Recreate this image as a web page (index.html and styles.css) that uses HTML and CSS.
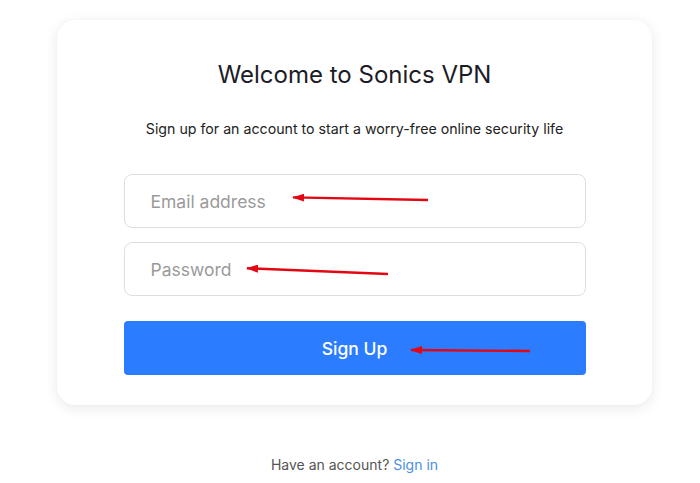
FILE: index.html
```html
<!DOCTYPE html>
<html>
<head>
<meta charset="utf-8">
<link rel="stylesheet" href="styles.css">
</head>
<body>
<main class="page">
  <section class="card">
    <h1 class="title">Welcome to Sonics VPN</h1>
    <p class="subtitle">Sign up for an account to start a worry-free online security life</p>
    <form class="form">
      <div class="field"><input class="input" type="email" placeholder="Email address"></div>
      <div class="field"><input class="input" type="password" placeholder="Password"></div>
      <button class="btn" type="button">Sign Up</button>
    </form>
  </section>
  <p class="footer">Have an account? <a class="link" href="#">Sign in</a></p>
</main>
<svg class="arrows" width="700" height="483" viewBox="0 0 700 483">
  <defs>
    <marker id="head" markerWidth="12" markerHeight="8" refX="11" refY="4" orient="auto" markerUnits="userSpaceOnUse">
      <path d="M0 0 L12 4 L0 8 Z" fill="#e30613"/>
    </marker>
  </defs>
  <line x1="428" y1="200" x2="293" y2="197.4" stroke="#e30613" stroke-width="2.4" marker-end="url(#head)"/>
  <line x1="388" y1="274" x2="247" y2="268.2" stroke="#e30613" stroke-width="2.4" marker-end="url(#head)"/>
  <line x1="530" y1="351" x2="411" y2="350" stroke="#e30613" stroke-width="2.4" marker-end="url(#head)"/>
</svg>
</body>
</html>
```
FILE: styles.css
```css
* { box-sizing: border-box; }
html, body { margin: 0; padding: 0; background: #fff; }
body {
  font-family: Inter, "Noto Sans", sans-serif;
  width: 700px;
  height: 483px;
  overflow: hidden;
  position: relative;
}
.page {
  display: flex;
  flex-direction: column;
  align-items: flex-start;
  padding: 20px 0 0 57px;
}
.card {
  width: 595px;
  height: 385px;
  background: #fff;
  border-radius: 18px;
  box-shadow: 0 3px 14px rgba(0, 0, 0, 0.09), 0 0 2px rgba(0,0,0,0.04);
  padding: 41px 66px 30px;
  display: flex;
  flex-direction: column;
  align-items: center;
}
.title {
  margin: 0;
  font-size: 24px;
  line-height: 28px;
  font-weight: 400;
  color: #1c1c28;
}
.subtitle {
  margin: 30px 0 0;
  font-size: 14.2px;
  line-height: 20px;
  color: #222;
}
.form {
  margin-top: 35px;
  width: 462px;
  display: flex;
  flex-direction: column;
}
.field + .field { margin-top: 14px; }
.input {
  display: block;
  width: 100%;
  height: 54px;
  border: 1px solid #dedede;
  border-radius: 8px;
  padding: 0 26px;
  font-family: inherit;
  font-size: 17.5px;
  color: #333;
  background: #fff;
  outline: none;
}
.input::placeholder { color: #9a9a9a; }
.btn {
  margin-top: 25px;
  height: 54px;
  border: none;
  border-radius: 4px;
  background: #2b7cff;
  color: #fff;
  font-family: inherit;
  font-size: 17.5px;
  font-weight: 500;
}
.footer {
  margin: 50px 0 0;
  width: 595px;
  text-align: center;
  font-size: 14px;
  line-height: 20px;
  color: #555;
}
.link { color: #4a8fe7; text-decoration: none; }
.arrows {
  position: absolute;
  left: 0;
  top: 0;
  pointer-events: none;
}
```
